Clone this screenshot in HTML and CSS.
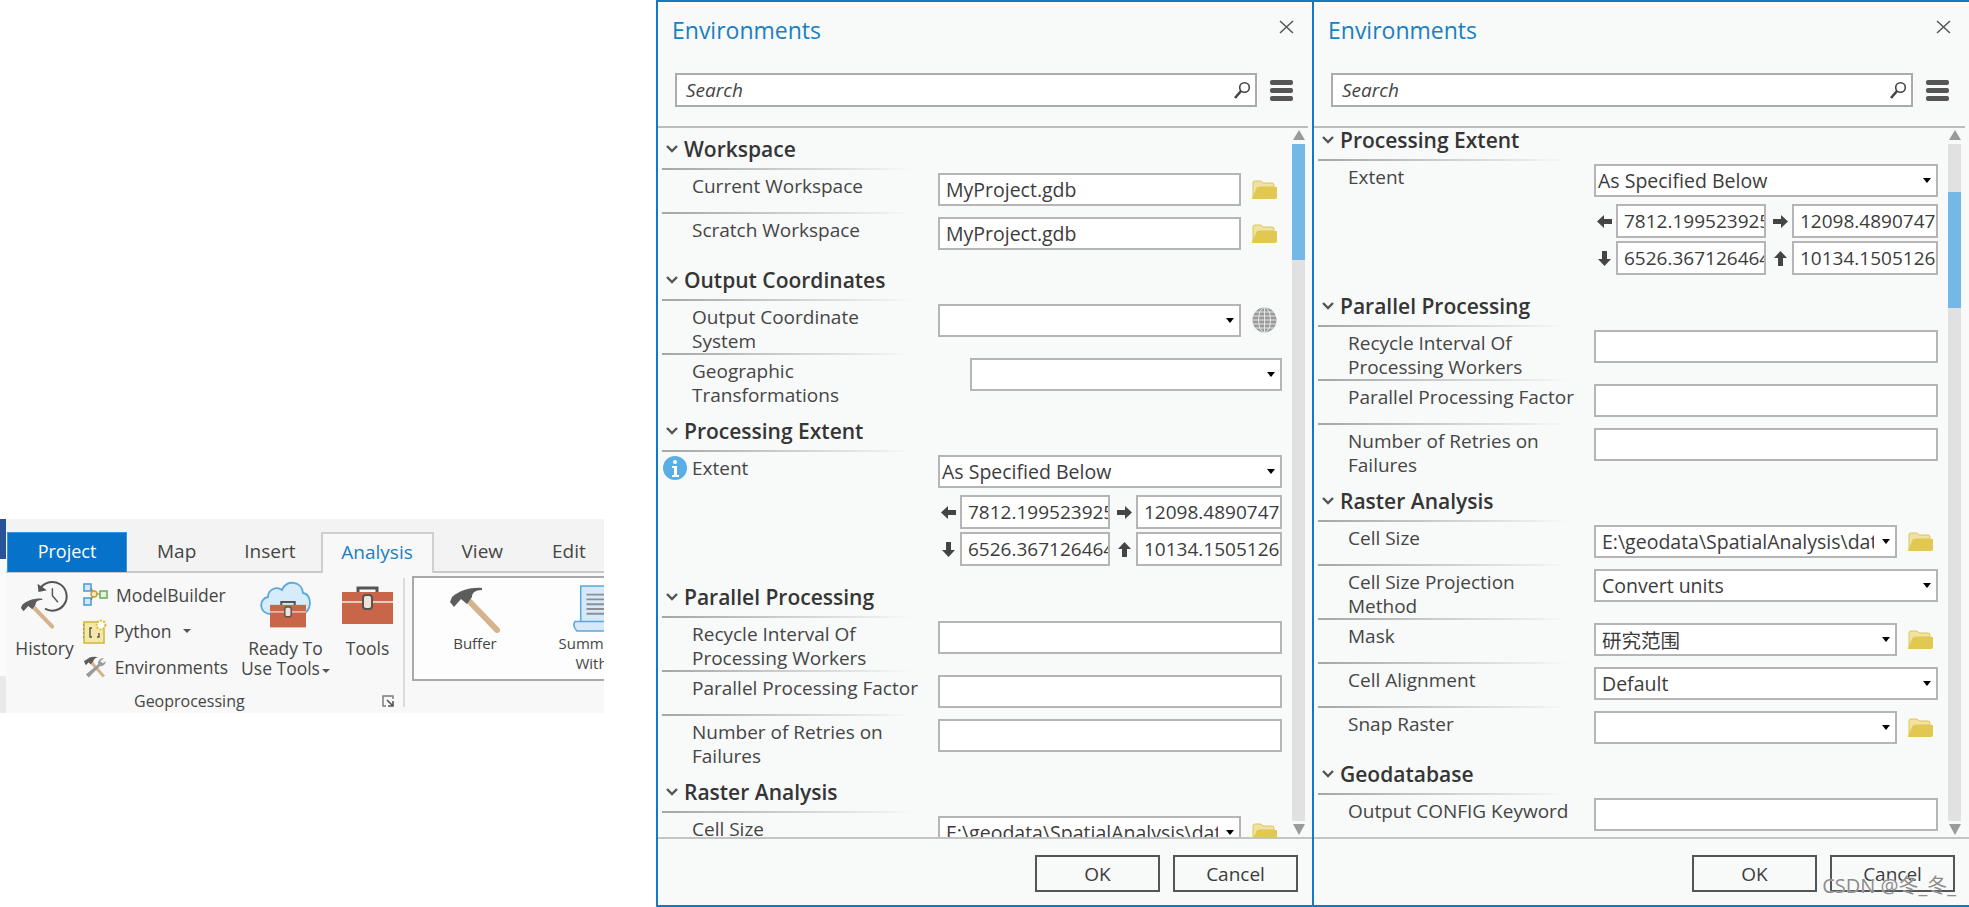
FILE: index.html
```html
<!DOCTYPE html>
<html>
  <head>
    <meta name="viewport" content="width=device-width, initial-scale=1.0">
    <title>Environments</title>
    <link rel="stylesheet" href="styles.css">
  </head>
  <body>
    <svg class="sprites" width="0" height="0">
      <symbol id="i-folder" viewBox="0 0 25 19">
        <path d="M1 17V3q0-2 2-2h6l2 2h9q2 0 2 2v2H7L3 17z" fill="#f0e2a0" stroke="#dcc65a"/>
        <path d="M0 19V18L5 7h20v10q0 2-2 2z" fill="#e2c850"/>
      </symbol>
      <symbol id="i-chevron" viewBox="0 0 12 8">
        <path d="M1 1l5 5 5-5" fill="none" stroke="#555" stroke-width="2.4"/>
      </symbol>
      <symbol id="i-arrow" viewBox="0 0 15 15">
        <path d="M0 7.5L7 1v4h8v5H7v4z" fill="#444"/>
      </symbol>
      <symbol id="i-hammer" viewBox="0 0 50 46">
        <path d="M20 15l27 28" fill="none" stroke="#d4b48c" stroke-width="6" stroke-linecap="round"/>
        <path d="M0 15L2 10C10 3 22 0 32 1L32 3C25 3 22 6 22 10L17 17 11 12 4 20z" fill="#5c5c5c"/>
      </symbol>
      <symbol id="i-toolbox" viewBox="0 0 51 38">
        <path d="M16 8V2h19v6" fill="none" stroke="#555" stroke-width="3"/>
        <rect x="0" y="6" width="51" height="32" fill="#c9664a"/>
        <rect x="0" y="15" width="51" height="2" fill="#edc9ba"/>
        <rect x="21" y="9" width="9" height="14" rx="3" fill="#efe3dc" stroke="#555" stroke-width="2"/>
      </symbol>
    </svg>

    <div class="ribbon-area">
      <div class="ribbon-wrap">
        <div class="edge"></div>
        <div class="ribbon">
          <div class="tabs">
            <div class="tab tab-project">Project</div>
            <div class="tab tab-map">Map</div>
            <div class="tab">Insert</div>
            <div class="tab tab-active">Analysis</div>
            <div class="tab tab-view">View</div>
            <div class="tab tab-edit">Edit</div>
          </div>
          <div class="ribbon-body">
            <div class="group">
              <div class="group-tools">
                <div class="big-tool tool-history">
                  <svg class="big-icon" width="56" height="54" viewBox="18 578 56 54">
                    <path d="M41 587A15.5 15.5 0 1 1 46 609" fill="none" stroke="#555" stroke-width="2.2"/>
                    <path d="M38 582l1 9 9-2z" fill="#555"/>
                    <path d="M54 587v8l6 7" fill="none" stroke="#555" stroke-width="1.6"/>
                    <use href="#i-hammer" x="20" y="597" width="36" height="34"/>
                  </svg>
                  <span>History</span>
                </div>
                <div class="small-tools">
                  <div class="small-tool">
                    <svg width="26" height="24" viewBox="84 582 26 24">
                      <rect x="85" y="583" width="7" height="7" fill="#d4e8f7" stroke="#4d9fdb" stroke-width="1.6"/>
                      <rect x="85" y="597" width="7" height="7" fill="#d4e8f7" stroke="#4d9fdb" stroke-width="1.6"/>
                      <path d="M92 587l3 6-3 6M98 593h3" fill="none" stroke="#8a7a50" stroke-width="1.2"/>
                      <circle cx="95" cy="593" r="3" fill="#f6e7b8" stroke="#c99a3a" stroke-width="1.4"/>
                      <rect x="101" y="590" width="7" height="7" fill="#e4f2de" stroke="#6fb060" stroke-width="1.6"/>
                    </svg>
                    <span>ModelBuilder</span>
                  </div>
                  <div class="small-tool">
                    <svg class="python-icon" width="24" height="25" viewBox="83 617 24 25">
                      <rect x="84" y="620" width="20" height="21" fill="#f5e8a6" stroke="#d3b945" stroke-width="1.6"/>
                      <path d="M84 623h-1M84 627h-1M84 631h-1M84 635h-1" stroke="#666" stroke-width="1.2"/>
                      <path d="M92 626h-2v9h2M97 635h2v-4" fill="none" stroke="#555" stroke-width="1.4"/>
                      <circle cx="101" cy="623" r="4.4" fill="#fff" stroke="#e3b93c" stroke-width="2" stroke-dasharray="2 1.2"/>
                    </svg>
                    <span>Python</span>
                    <i class="mini-caret"></i>
                  </div>
                  <div class="small-tool">
                    <svg width="26" height="23" viewBox="84 653 26 23">
                      <path d="M90 656l16 18" stroke="#d4b48c" stroke-width="3.4"/>
                      <path d="M85 658l6-4c3-1 7-1 9 0-3 0-5 2-5 4l-3 3-2-2-3 3z" fill="#5c5c5c"/>
                      <path d="M106 655a5 5 0 0 0-6 6L87 672l3 3 12-12a5 5 0 0 0 6-5l-3 2-3-2z" fill="#9a9a9a"/>
                    </svg>
                    <span>Environments</span>
                  </div>
                </div>
                <div class="big-tool tool-ready">
                  <svg class="big-icon" width="52" height="50" viewBox="261 581 52 50">
                    <path d="M272 615c-12 0-13-15-3-17 0-8 9-11 14-7 4-11 20-9 21 3 10 1 9 21-2 21z" fill="#d7ecfb" stroke="#5aa8dc" stroke-width="1.8"/>
                    <use href="#i-toolbox" x="271" y="601" width="36" height="28"/>
                  </svg>
                  <span>Ready To</span>
                  <span class="nowrap">Use Tools<i class="mini-caret mini-caret-tight"></i></span>
                </div>
                <div class="big-tool tool-tools">
                  <svg class="big-icon" width="51" height="38"><use href="#i-toolbox"/></svg>
                  <span>Tools</span>
                </div>
              </div>
              <div class="group-foot">
                <span>Geoprocessing</span>
                <svg class="launcher" width="12" height="12" viewBox="0 0 12 12">
                  <path d="M11 4V1H1v10h3" fill="none" stroke="#777" stroke-width="1.4"/>
                  <path d="M5 5l6 6M11 6v5H6" fill="none" stroke="#555" stroke-width="1.6"/>
                </svg>
              </div>
            </div>
            <div class="sep"></div>
            <div class="gallery">
              <div class="gallery-item item-buffer">
                <svg class="gallery-icon" width="50" height="46"><use href="#i-hammer"/></svg>
                <span>Buffer</span>
              </div>
              <div class="gallery-item item-summ">
                <svg class="gallery-icon" width="56" height="50" viewBox="0 0 56 50">
                  <path d="M10 1h38v38H10z" fill="#d7e9f8" stroke="#5aa8dc" stroke-width="1.6"/>
                  <path d="M16 10h26M16 15h26M16 20h26M16 25h26M16 30h26" stroke="#8a8f94" stroke-width="2"/>
                  <path d="M4 38h44q4 5 0 10H6q-5-5-2-10z" fill="#d7e9f8" stroke="#5aa8dc" stroke-width="1.6"/>
                </svg>
                <span>Summarize</span>
                <span>Within</span>
              </div>
            </div>
          </div>
        </div>
      </div>
    </div>

    <div class="panel">
      <div class="title-bar">
        <span class="title">Environments</span>
        <svg class="close" width="15" height="14" viewBox="0 0 15 14"><path d="M1 1l13 12M14 1L1 13" stroke="#555" stroke-width="1.5"/></svg>
      </div>
      <div class="search-row">
        <div class="search">
          <span>Search</span>
          <svg width="18" height="18" viewBox="0 0 18 18"><circle cx="11.5" cy="6.5" r="4.8" fill="none" stroke="#444" stroke-width="1.6"/><path d="M8 10l-6 7" stroke="#444" stroke-width="2.6"/></svg>
        </div>
        <div class="menu"><i></i><i></i><i></i></div>
      </div>
      <div class="list">
        <div class="list-scroll scroll-top">
          <div class="heading"><svg class="chevron"><use href="#i-chevron"/></svg>Workspace</div>
          <div class="row">
            <div class="label">Current Workspace</div>
            <div class="field field-narrow">MyProject.gdb</div>
            <svg class="side-icon"><use href="#i-folder"/></svg>
          </div>
          <div class="row">
            <div class="label">Scratch Workspace</div>
            <div class="field field-narrow">MyProject.gdb</div>
            <svg class="side-icon"><use href="#i-folder"/></svg>
          </div>

          <div class="heading"><svg class="chevron"><use href="#i-chevron"/></svg>Output Coordinates</div>
          <div class="row">
            <div class="label">Output Coordinate<br>System</div>
            <div class="field field-narrow drop"></div>
            <svg class="globe" width="25" height="26" viewBox="0 0 25 26">
              <ellipse cx="12.5" cy="13" rx="12" ry="12.5" fill="#9a9a9a"/>
              <path d="M12.5 .5v25M.5 13h24M3 5h19M3 21h19M1 9h23M1 17h23" stroke="#e6e6e6" stroke-width="1"/>
              <ellipse cx="12.5" cy="13" rx="6" ry="12.5" fill="none" stroke="#e6e6e6"/>
            </svg>
          </div>
          <div class="row">
            <div class="label">Geographic<br>Transformations</div>
            <div class="field field-geo drop"></div>
          </div>

          <div class="heading"><svg class="chevron"><use href="#i-chevron"/></svg>Processing Extent</div>
          <div class="row row-info">
            <svg class="info" width="24" height="24" viewBox="0 0 24 24">
              <circle cx="12" cy="12" r="12" fill="#5aaee6"/>
              <circle cx="12" cy="6" r="2" fill="#fff"/>
              <path d="M9 10h5v9h2v2H9v-2h2v-7H9z" fill="#fff"/>
            </svg>
            <div class="label">Extent</div>
            <div class="extent">
              <div class="field field-wide field-tight drop">As Specified Below</div>
              <div class="coords">
                <svg class="arrow"><use href="#i-arrow"/></svg>
                <div class="coord">7812.199523925</div>
                <svg class="arrow arrow-right"><use href="#i-arrow"/></svg>
                <div class="coord">12098.489074707</div>
                <svg class="arrow arrow-down"><use href="#i-arrow"/></svg>
                <div class="coord">6526.367126464</div>
                <svg class="arrow arrow-up"><use href="#i-arrow"/></svg>
                <div class="coord">10134.150512695</div>
              </div>
            </div>
          </div>

          <div class="heading"><svg class="chevron"><use href="#i-chevron"/></svg>Parallel Processing</div>
          <div class="row">
            <div class="label">Recycle Interval Of<br>Processing Workers</div>
            <div class="field field-wide"></div>
          </div>
          <div class="row">
            <div class="label">Parallel Processing Factor</div>
            <div class="field field-wide"></div>
          </div>
          <div class="row">
            <div class="label">Number of Retries on<br>Failures</div>
            <div class="field field-wide"></div>
          </div>

          <div class="heading"><svg class="chevron"><use href="#i-chevron"/></svg>Raster Analysis</div>
          <div class="row">
            <div class="label">Cell Size</div>
            <div class="field field-narrow drop"><span class="clip">E:\geodata\SpatialAnalysis\data\dem</span></div>
            <svg class="side-icon"><use href="#i-folder"/></svg>
          </div>
        </div>
        <div class="scrollbar">
          <i class="scroll-up"></i>
          <div class="track"><div class="thumb"></div></div>
          <i class="scroll-down"></i>
        </div>
      </div>
      <div class="footer">
        <button class="btn">OK</button>
        <button class="btn">Cancel</button>
      </div>
    </div>

    <div class="panel panel-last">
      <div class="title-bar">
        <span class="title">Environments</span>
        <svg class="close" width="15" height="14" viewBox="0 0 15 14"><path d="M1 1l13 12M14 1L1 13" stroke="#555" stroke-width="1.5"/></svg>
      </div>
      <div class="search-row">
        <div class="search">
          <span>Search</span>
          <svg width="18" height="18" viewBox="0 0 18 18"><circle cx="11.5" cy="6.5" r="4.8" fill="none" stroke="#444" stroke-width="1.6"/><path d="M8 10l-6 7" stroke="#444" stroke-width="2.6"/></svg>
        </div>
        <div class="menu"><i></i><i></i><i></i></div>
      </div>
      <div class="list">
        <div class="list-scroll scroll-mid">
          <div class="heading"><svg class="chevron"><use href="#i-chevron"/></svg>Processing Extent</div>
          <div class="row">
            <div class="label">Extent</div>
            <div class="extent">
              <div class="field field-wide field-tight drop">As Specified Below</div>
              <div class="coords">
                <svg class="arrow"><use href="#i-arrow"/></svg>
                <div class="coord">7812.199523925</div>
                <svg class="arrow arrow-right"><use href="#i-arrow"/></svg>
                <div class="coord">12098.489074707</div>
                <svg class="arrow arrow-down"><use href="#i-arrow"/></svg>
                <div class="coord">6526.367126464</div>
                <svg class="arrow arrow-up"><use href="#i-arrow"/></svg>
                <div class="coord">10134.150512695</div>
              </div>
            </div>
          </div>

          <div class="heading"><svg class="chevron"><use href="#i-chevron"/></svg>Parallel Processing</div>
          <div class="row">
            <div class="label">Recycle Interval Of<br>Processing Workers</div>
            <div class="field field-wide"></div>
          </div>
          <div class="row">
            <div class="label">Parallel Processing Factor</div>
            <div class="field field-wide"></div>
          </div>
          <div class="row">
            <div class="label">Number of Retries on<br>Failures</div>
            <div class="field field-wide"></div>
          </div>

          <div class="heading"><svg class="chevron"><use href="#i-chevron"/></svg>Raster Analysis</div>
          <div class="row">
            <div class="label">Cell Size</div>
            <div class="field field-narrow drop"><span class="clip">E:\geodata\SpatialAnalysis\data\dem</span></div>
            <svg class="side-icon"><use href="#i-folder"/></svg>
          </div>
          <div class="row">
            <div class="label">Cell Size Projection<br>Method</div>
            <div class="field field-wide drop">Convert units</div>
          </div>
          <div class="row">
            <div class="label">Mask</div>
            <div class="field field-narrow drop">研究范围</div>
            <svg class="side-icon"><use href="#i-folder"/></svg>
          </div>
          <div class="row">
            <div class="label">Cell Alignment</div>
            <div class="field field-wide drop">Default</div>
          </div>
          <div class="row">
            <div class="label">Snap Raster</div>
            <div class="field field-narrow drop"></div>
            <svg class="side-icon"><use href="#i-folder"/></svg>
          </div>

          <div class="heading"><svg class="chevron"><use href="#i-chevron"/></svg>Geodatabase</div>
          <div class="row">
            <div class="label">Output CONFIG Keyword</div>
            <div class="field field-wide"></div>
          </div>
        </div>
        <div class="scrollbar">
          <i class="scroll-up"></i>
          <div class="track"><div class="thumb thumb-mid"></div></div>
          <i class="scroll-down"></i>
        </div>
      </div>
      <div class="footer">
        <button class="btn">OK</button>
        <button class="btn">Cancel</button>
      </div>
      <div class="watermark">CSDN @冬_冬_</div>
    </div>
  </body>
</html>
```

FILE: styles.css
```css
* {
  box-sizing: border-box;
}
body {
  margin: 0;
  height: 907px;
  display: flex;
  overflow: hidden;
  background-color: white;
  font-family: "Open Sans", "Noto Sans CJK SC", sans-serif;
  color: #454545;
}
.sprites {
  position: absolute;
}

/* ribbon on the left */
.ribbon-area {
  flex: 0 0 656px;
  padding-top: 519px;
}
.ribbon-wrap {
  display: flex;
  width: 604px;
  height: 194px;
}
.edge {
  flex: 0 0 6px;
  background: linear-gradient(#2a5298 0, #2a5298 40px, #fbfbfb 40px, #fbfbfb 157px, #e9e9e9 157px);
}
.ribbon {
  flex: 1;
  min-width: 0;
  overflow: hidden;
  background-color: #f8f8f8;
}
.tabs {
  display: flex;
  height: 54px;
  padding: 13px 0 0 1px;
  background-color: #f3f3f3;
  border-bottom: 2px solid #c9c9c9;
}
.tab {
  flex-shrink: 0;
  padding: 0 24px;
  font-size: 19px;
  line-height: 38px;
  height: 40px;
}
.tab-project {
  width: 120px;
  padding: 0;
  text-align: center;
  color: white;
  background-color: #0672c9;
  border: 1px solid #3a93da;
  border-bottom: none;
  font-size: 18px;
  line-height: 36px;
}
.tab-map {
  margin-left: 6px;
}
.tab-active {
  width: 113px;
  height: 41px;
  margin-left: 1px;
  padding: 0;
  text-align: center;
  color: #1a7fc0;
  background-color: #f8f8f8;
  border: 2px solid #cfcfcf;
  border-bottom: none;
  line-height: 36px;
}
.tab-view {
  margin-left: 4px;
}
.tab-edit {
  padding-left: 25px;
}
.ribbon-body {
  display: flex;
  height: 140px;
}
.group {
  flex: 0 0 397px;
  display: flex;
  flex-direction: column;
}
.group-tools {
  display: flex;
  height: 118px;
  padding-left: 10px;
  font-size: 17.5px;
}
.big-tool {
  display: flex;
  flex-direction: column;
  align-items: center;
  padding-top: 7px;
  line-height: 20px;
}
.big-icon {
  flex: 0 0 50px;
  margin-bottom: 8px;
}
.nowrap {
  white-space: nowrap;
}
.tool-history {
  width: 57px;
}
.tool-ready {
  width: 91px;
  margin-left: 12px;
}
.tool-tools {
  width: 51px;
  margin-left: 11px;
}
.small-tools {
  width: 145px;
  margin-left: 10px;
  padding-top: 4px;
}
.small-tool {
  display: flex;
  align-items: center;
  height: 36px;
  gap: 7px;
}
.mini-caret {
  display: inline-block;
  margin-left: 4px;
  border-left: 4px solid transparent;
  border-right: 4px solid transparent;
  border-top: 4px solid #555;
}
.mini-caret-tight {
  margin-left: 2px;
  vertical-align: 2px;
}
.group-foot {
  display: flex;
  align-items: center;
  height: 20px;
  padding: 0 9px 0 128px;
  font-size: 16px;
}
.launcher {
  margin-left: auto;
}
.sep {
  flex: 0 0 2px;
  margin: 5px 0 6px;
  background-color: #dcdcdc;
}
.gallery {
  display: flex;
  flex: 0 0 300px;
  height: 105px;
  margin: 3px 0 0 7px;
  padding-left: 11px;
  border: 2px solid #a9a9a9;
  background-color: #fdfdfd;
  font-size: 15px;
  line-height: 20px;
}
.gallery-item {
  display: flex;
  flex-direction: column;
  align-items: center;
  padding-top: 9px;
}
.item-buffer {
  width: 100px;
}
.item-summ {
  width: 90px;
  margin-left: 28px;
  padding-top: 7px;
}
.item-buffer .gallery-icon {
  flex: 0 0 46px;
}
.item-summ .gallery-icon {
  flex: 0 0 48px;
}

/* Environments panels */
.panel {
  position: relative;
  flex: 0 0 656px;
  min-width: 0;
  height: 907px;
  display: flex;
  flex-direction: column;
  background-color: #f8f9f9;
  border: 2px solid #0f7ac6;
  border-right: none;
}
.panel-last {
  flex: 1;
}
.title-bar {
  display: flex;
  justify-content: space-between;
  height: 71px;
  padding: 12px 18px 0 14px;
}
.title {
  font-size: 23px;
  line-height: 32px;
  color: #1a7fc0;
}
.close {
  margin-top: 6px;
}
.search-row {
  display: flex;
  height: 55px;
  padding: 0 0 19px 17px;
  margin-right: 4px;
  border-bottom: 2px solid #bdbdbd;
}
.search {
  display: flex;
  align-items: center;
  justify-content: space-between;
  width: 582px;
  padding: 0 4px 0 9px;
  background-color: white;
  border: 2px solid #ababab;
  font-size: 19px;
  font-style: italic;
}
.menu {
  display: flex;
  flex-direction: column;
  gap: 3px;
  width: 23px;
  margin: 7px 0 0 13px;
}
.menu i {
  height: 5px;
  border-radius: 2px;
  background-color: #555;
}
.list {
  flex: 1;
  min-height: 0;
  display: flex;
  overflow: hidden;
}
.list-scroll {
  flex: 0 0 634px;
  padding: 0 10px 0 4px;
}
.scroll-top {
  margin-top: -3px;
}
.scroll-mid {
  margin-top: -12px;
}
.heading {
  display: flex;
  align-items: center;
  gap: 6px;
  height: 43px;
  padding: 5px 0 0 4px;
  font-size: 21px;
  font-weight: 600;
  color: #353535;
}
.chevron {
  width: 12px;
  height: 8px;
}
.row {
  display: flex;
  align-items: flex-start;
  min-height: 44px;
  padding: 3px 0 0 30px;
  border-top: 2px solid;
  border-image: linear-gradient(90deg, #a5a5a5, #e6e6e6 200px, transparent 250px) 1;
}
.label {
  flex: 0 0 246px;
  margin-top: 1px;
  font-size: 19px;
  line-height: 24px;
  white-space: nowrap;
}
.row-info {
  padding-left: 1px;
}
.row-info .label {
  margin-left: 5px;
}
.info {
  flex: 0 0 24px;
  margin-top: 1px;
}
.field {
  display: flex;
  align-items: center;
  min-width: 0;
  height: 33px;
  padding: 0 6px;
  background-color: white;
  border: 2px solid #b5b5b5;
  font-size: 19.5px;
  color: #3c3c3c;
  white-space: nowrap;
}
.field-narrow {
  flex: 0 0 303px;
}
.field-wide {
  flex: 0 0 344px;
  width: 344px;
}
.field-geo {
  flex: 0 0 312px;
  margin-left: 32px;
}
.field-tight {
  padding-left: 2px;
}
.drop::after {
  content: "";
  margin-left: auto;
  margin-right: -1px;
  border-left: 4px solid transparent;
  border-right: 4px solid transparent;
  border-top: 5px solid black;
}
.clip {
  flex: 1;
  min-width: 0;
  overflow: hidden;
  margin-right: 8px;
}
.side-icon {
  flex: 0 0 25px;
  width: 25px;
  height: 19px;
  margin: 7px 0 0 11px;
}
.globe {
  flex: 0 0 25px;
  margin: 3px 0 0 11px;
}
.extent {
  flex: 0 0 344px;
}
.coords {
  display: grid;
  grid-template-columns: 22px 150px 26px 146px;
  row-gap: 3px;
  align-items: center;
  margin: 7px 0;
}
.coord {
  height: 34px;
  padding: 0 1px 0 6px;
  overflow: hidden;
  background-color: white;
  border: 2px solid #b5b5b5;
  font-size: 19px;
  line-height: 30px;
  color: #3c3c3c;
  white-space: nowrap;
}
.arrow {
  width: 15px;
  height: 15px;
  margin-left: 3px;
}
.arrow-right {
  transform: rotate(180deg);
  margin-left: 7px;
}
.arrow-down {
  transform: rotate(-90deg);
}
.arrow-up {
  transform: rotate(90deg);
  margin-left: 7px;
}
.scrollbar {
  flex: 0 0 13px;
  display: flex;
  flex-direction: column;
  align-items: center;
  padding: 2px 0;
}
.scroll-up,
.scroll-down {
  flex: 0 0 auto;
  border-left: 6px solid transparent;
  border-right: 6px solid transparent;
}
.scroll-up {
  border-bottom: 10px solid #9a9a9a;
}
.scroll-down {
  border-top: 11px solid #9a9a9a;
}
.track {
  flex: 1;
  width: 13px;
  margin: 4px 0 3px;
  background-color: #e1e1e1;
}
.thumb {
  height: 116px;
  background-color: #74b8e8;
}
.thumb-mid {
  margin-top: 48px;
}
.footer {
  display: flex;
  justify-content: flex-end;
  gap: 13px;
  height: 68px;
  padding: 16px 14px 0 0;
  border-top: 2px solid #c4c4c4;
}
.btn {
  width: 125px;
  height: 37px;
  background-color: #f8f9f9;
  border: 2px solid #555;
  font-family: inherit;
  font-size: 19px;
  color: #3c3c3c;
}
.watermark {
  position: absolute;
  right: 13px;
  bottom: 6px;
  font-size: 20px;
  color: #8c8c8c;
  text-shadow: 0 0 1px white;
}
```
